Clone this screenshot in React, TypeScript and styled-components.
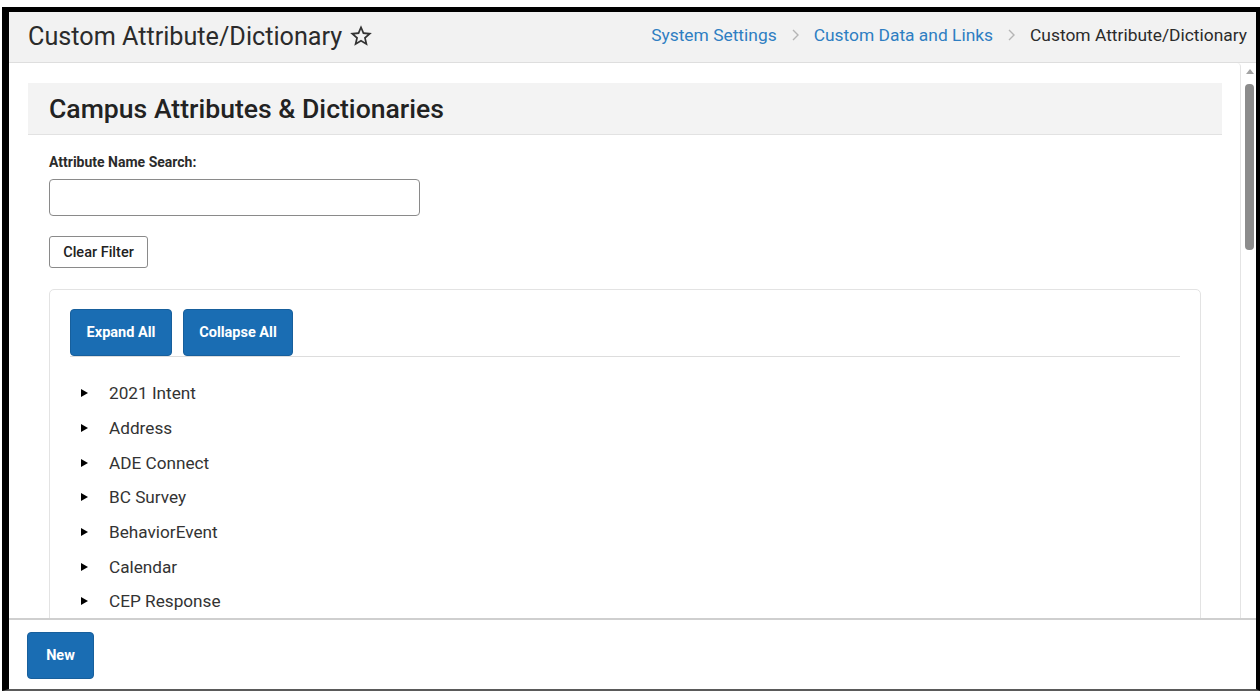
import styled, { createGlobalStyle } from 'styled-components';

const GlobalStyle = createGlobalStyle`
  html, body {
    margin: 0;
    padding: 0;
    background: #ffffff;
    font-family: Roboto, "Liberation Sans", Arial, sans-serif;
    color: #333;
  }
  * {
    box-sizing: border-box;
  }
`;

const attributes = [
  '2021 Intent',
  'Address',
  'ADE Connect',
  'BC Survey',
  'BehaviorEvent',
  'Calendar',
  'CEP Response',
];

const crumbs = ['System Settings', 'Custom Data and Links'];

const StarIcon = () => (
  <svg width="26" height="26" viewBox="0 0 24 24" fill="#333">
    <path d="M22 9.24l-7.19-.62L12 2 9.19 8.63 2 9.24l5.46 4.73L5.82 21 12 17.27 18.18 21l-1.63-7.03L22 9.24zM12 15.4l-3.76 2.27 1-4.28-3.32-2.88 4.38-.38L12 6.1l1.71 4.04 4.38.38-3.32 2.88 1 4.28L12 15.4z" />
  </svg>
);

const ChevronIcon = () => (
  <svg width="10" height="14" viewBox="0 0 10 14" fill="none">
    <path d="M3 2l5 5-5 5" stroke="#b5b5b5" strokeWidth="1.4" />
  </svg>
);

export default function App() {
  return (
    <>
      <GlobalStyle />
      <Frame>
        <Header>
          <PageTitle>
            Custom Attribute/Dictionary
            <StarIcon />
          </PageTitle>
          <Breadcrumbs>
            {crumbs.map((c) => (
              <Crumb key={c}>
                <CrumbLink>{c}</CrumbLink>
                <ChevronIcon />
              </Crumb>
            ))}
            <CrumbCurrent>Custom Attribute/Dictionary</CrumbCurrent>
          </Breadcrumbs>
        </Header>

        <Main>
          <ScrollArea>
            <SectionHeader>
              <SectionTitle>Campus Attributes &amp; Dictionaries</SectionTitle>
            </SectionHeader>
            <SectionBody>
              <FieldLabel>Attribute Name Search:</FieldLabel>
              <SearchInput type="text" />
              <OutlineButton>Clear Filter</OutlineButton>

              <TreeCard>
                <Toolbar>
                  <PrimaryButton $width={102}>Expand All</PrimaryButton>
                  <PrimaryButton $width={110}>Collapse All</PrimaryButton>
                </Toolbar>
                <TreeList>
                  {attributes.map((name) => (
                    <TreeItem key={name}>
                      <Caret />
                      {name}
                    </TreeItem>
                  ))}
                </TreeList>
              </TreeCard>
            </SectionBody>
          </ScrollArea>
          <Scrollbar>
            <ScrollArrow />
            <ScrollThumb />
          </Scrollbar>
        </Main>

        <Footer>
          <PrimaryButton $width={67}>New</PrimaryButton>
        </Footer>
      </Frame>
    </>
  );
}

const Frame = styled.div`
  margin: 7px 0 0 2px;
  height: 684px;
  display: flex;
  flex-direction: column;
  border-top: 5px solid #000;
  border-left: 7px solid #000;
  border-right: 4px solid #000;
  border-bottom: 2px solid #5a5a5a;
  background: #fff;
  overflow: hidden;
`;

const Header = styled.header`
  height: 51px;
  flex-shrink: 0;
  display: flex;
  align-items: center;
  justify-content: space-between;
  padding: 0 9px 0 19px;
  background: #f2f2f2;
  border-bottom: 1px solid #dedede;
`;

const PageTitle = styled.h1`
  margin: 0;
  display: flex;
  align-items: center;
  gap: 6px;
  font-size: 25.2px;
  font-weight: 400;
  color: #2b2b2b;
  padding-bottom: 2px;
`;

const Breadcrumbs = styled.nav`
  display: flex;
  align-items: center;
  font-size: 17.4px;
  padding-bottom: 4px;
`;

const Crumb = styled.span`
  display: flex;
  align-items: center;
  gap: 13px;
  margin-right: 14px;
`;

const CrumbLink = styled.a`
  color: #2e7ec2;
  cursor: pointer;
`;

const CrumbCurrent = styled.span`
  color: #2b2b2b;
`;

const Main = styled.main`
  flex: 1;
  min-height: 0;
  display: flex;
  overflow: hidden;
`;

const ScrollArea = styled.div`
  flex: 1;
  padding: 20px 18px 0 19px;
  border-right: 1px solid #e4e4e4;
  border-top-right-radius: 4px;
  overflow: hidden;
`;

const SectionHeader = styled.div`
  height: 52px;
  display: flex;
  align-items: center;
  padding: 0 21px;
  background: #f3f3f3;
  border-bottom: 1px solid #e2e2e2;
`;

const SectionTitle = styled.h2`
  margin: 0;
  font-size: 26.6px;
  font-weight: 500;
  color: #222;
`;

const SectionBody = styled.div`
  padding: 19px 21px 0;
  display: flex;
  flex-direction: column;
  align-items: flex-start;
`;

const FieldLabel = styled.label`
  font-size: 14px;
  font-weight: 700;
  color: #2b2b2b;
  margin-bottom: 9px;
`;

const SearchInput = styled.input`
  width: 371px;
  height: 37px;
  border: 1px solid #8a8a8a;
  border-radius: 4px;
  margin-bottom: 20px;
  font-size: 15px;
  padding: 0 10px;
`;

const OutlineButton = styled.button`
  height: 32px;
  width: 99px;
  padding: 0;
  background: #fff;
  border: 1px solid #8a8a8a;
  border-radius: 3px;
  font-family: Roboto, "Liberation Sans", Arial, sans-serif;
  font-size: 14.5px;
  font-weight: 500;
  color: #222;
  margin-bottom: 21px;
`;

const TreeCard = styled.div`
  align-self: stretch;
  border: 1px solid #e3e3e3;
  border-radius: 5px;
  padding: 19px 20px 0;
`;

const Toolbar = styled.div`
  display: flex;
  gap: 11px;
  border-bottom: 1px solid #dddddd;
`;

const PrimaryButton = styled.button<{ $width: number }>`
  width: ${(p) => p.$width}px;
  height: 47px;
  background: #1a6db3;
  border: 1px solid #175f9c;
  border-radius: 4px;
  color: #fff;
  font-family: Roboto, "Liberation Sans", Arial, sans-serif;
  font-size: 14.5px;
  font-weight: 700;
  padding: 0;
`;

const TreeList = styled.ul`
  list-style: none;
  margin: 0;
  padding: 19px 0 40px 11px;
`;

const TreeItem = styled.li`
  height: 34.7px;
  display: flex;
  align-items: center;
  font-size: 17.2px;
  color: #333;
`;

const Caret = styled.span`
  width: 0;
  height: 0;
  border-top: 4.5px solid transparent;
  border-bottom: 4.5px solid transparent;
  border-left: 7px solid #000;
  margin-right: 21px;
`;

const Scrollbar = styled.div`
  width: 15px;
  flex-shrink: 0;
  display: flex;
  flex-direction: column;
  align-items: center;
  padding: 6px 0 0 2px;
`;

const ScrollArrow = styled.span`
  width: 0;
  height: 0;
  border-left: 4px solid transparent;
  border-right: 4px solid transparent;
  border-bottom: 5px solid #a3a3a3;
  margin-bottom: 10px;
`;

const ScrollThumb = styled.div`
  width: 9px;
  height: 166px;
  background: #8c8c8c;
  border-radius: 4px;
`;

const Footer = styled.footer`
  height: 71px;
  flex-shrink: 0;
  border-top: 2px solid #cfcfcf;
  padding: 12px 18px 0;
`;
